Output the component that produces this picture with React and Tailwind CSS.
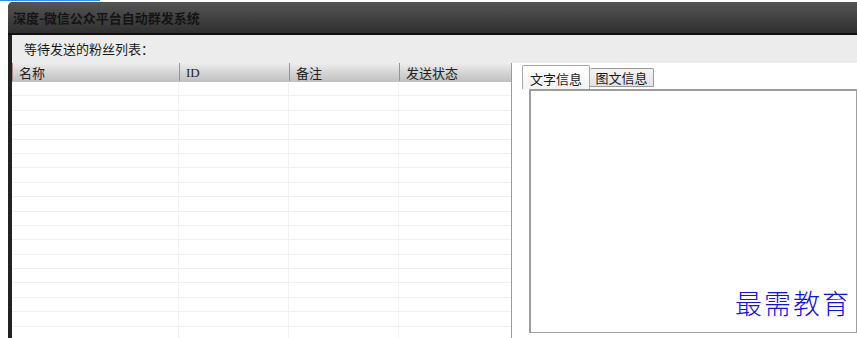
import React from 'react';

const cjk = { fontFamily: '"Noto Sans CJK SC", "Liberation Sans", sans-serif' };

const columns = [
  { name: '名称', w: 'w-[167px]' },
  { name: 'ID', w: 'w-[110px]' },
  { name: '备注', w: 'w-[110px]' },
  { name: '发送状态', w: 'flex-1' },
];

const rows = Array.from({ length: 18 });

const App = () => {
  return (
    <div className="relative w-[857px] h-[338px] overflow-hidden bg-white flex flex-col" style={cjk}>
      {/* top strip */}
      <div className="h-[2px] flex">
        <div className="w-[100px] h-px bg-[#3b8fe0]" />
      </div>

      <div className="flex flex-1 min-h-0">
        <div className="w-[8px] bg-white" />

        {/* window */}
        <div className="flex-1 flex flex-col min-h-0 rounded-tl-[5px] bg-[#1c1c1c] overflow-hidden">
          {/* title bar */}
          <div className="h-[33px] flex items-center px-[5px] bg-gradient-to-b from-[#555555] via-[#424242] to-[#2f2f2f] border-b-2 border-[#0f0f0f]">
            <span className="text-[13px] font-bold text-[#141414]">深度-微信公众平台自动群发系统</span>
          </div>

          {/* body with dark left frame */}
          <div className="flex-1 flex flex-col min-h-0 border-l-4 border-[#222222] bg-white">
            <div className="h-[28px] flex items-center pl-[12px] bg-[#ececec] text-[13px] text-[#1a1a1a]">
              等待发送的粉丝列表：
            </div>

            <div className="flex flex-1 min-h-0">
              {/* table */}
              <div className="w-[500px] flex flex-col border-r border-[#9a9a9a]">
                <div className="h-[19px] flex bg-gradient-to-b from-[#ededed] via-[#d6d6d6] to-[#c2c2c2] border-b border-[#d9b8b8]">
                  {columns.map((c) => (
                    <div
                      key={c.name}
                      className={`${c.w} flex items-center pl-[6px] border-l border-[#b08a8a] text-[13px] text-[#222222] leading-none`}
                      style={c.name === 'ID' ? { fontFamily: '"Liberation Serif", serif', fontSize: '13px' } : undefined}
                    >
                      {c.name}
                    </div>
                  ))}
                </div>
                <div className="flex-1 flex flex-col overflow-hidden">
                  {rows.map((_, i) => (
                    <div key={i} className="h-[14.4px] shrink-0 flex border-b border-[#f0f0f0]">
                      <div className="w-[167px] border-r border-[#f2f2f2]" />
                      <div className="w-[110px] border-r border-[#f2f2f2]" />
                      <div className="w-[110px] border-r border-[#f2f2f2]" />
                      <div className="flex-1" />
                    </div>
                  ))}
                </div>
              </div>

              {/* right panel */}
              <div className="flex-1 flex flex-col pl-[10px] pb-[5px]">
                <div className="h-[26px] flex items-end">
                  <div className="h-[24px] w-[68px] flex items-center justify-center pt-[2px] rounded-t-[2px] border border-b-0 border-[#a8a8a8] bg-gradient-to-b from-white to-[#f3f3f3] text-[13px] text-[#1a1a1a]">
                    文字信息
                  </div>
                  <div className="h-[19px] mb-[2px] w-[64px] flex items-center justify-center rounded-t-[2px] border border-l-0 border-[#9a9a9a] bg-gradient-to-b from-[#f4f4f4] to-[#e2e2e2] text-[13px] text-[#1a1a1a]">
                    图文信息
                  </div>
                </div>
                <div className="flex-1 ml-[7px] border border-[#a0a0a0] border-l-2 border-t-2 border-l-[#9c9c9c] border-t-[#9c9c9c] bg-white" />
              </div>
            </div>
          </div>
        </div>
      </div>

      {/* watermark */}
      <div
        className="absolute left-[735px] top-[289px] text-[27px] leading-none text-[#1010f0] tracking-[2px]"
        style={{ fontFamily: '"Noto Sans CJK SC", serif', fontWeight: 300 }}
      >
        最需教育
      </div>
    </div>
  );
};

export default App;
